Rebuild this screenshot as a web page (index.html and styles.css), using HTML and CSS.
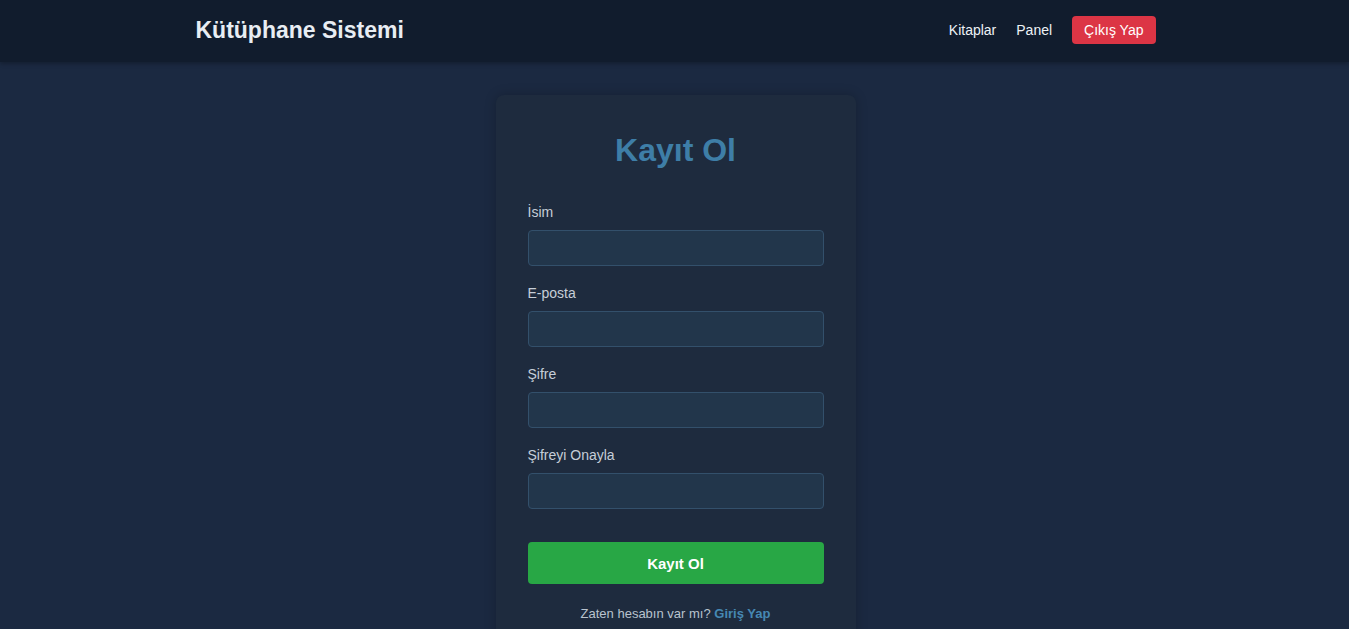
FILE: index.html
```html
<!DOCTYPE html>
<html lang="tr">
<head>
<meta charset="utf-8">
<title>Kayıt Ol - Kütüphane Sistemi</title>
<link rel="stylesheet" href="styles.css">
</head>
<body>
<header class="navbar">
  <div class="nav-inner">
    <a class="brand" href="#">Kütüphane Sistemi</a>
    <nav class="nav-links">
      <a href="#" class="nav-link">Kitaplar</a>
      <a href="#" class="nav-link">Panel</a>
      <a href="#" class="btn-logout">Çıkış Yap</a>
    </nav>
  </div>
</header>
<main class="main">
  <div class="card">
    <h2 class="card-title">Kayıt Ol</h2>
    <form class="form">
      <div class="form-group">
        <label class="label">İsim</label>
        <input class="input" type="text">
      </div>
      <div class="form-group">
        <label class="label">E-posta</label>
        <input class="input" type="email">
      </div>
      <div class="form-group">
        <label class="label">Şifre</label>
        <input class="input" type="password">
      </div>
      <div class="form-group">
        <label class="label">Şifreyi Onayla</label>
        <input class="input" type="password">
      </div>
      <button type="button" class="btn-submit">Kayıt Ol</button>
    </form>
    <p class="footer-text">Zaten hesabın var mı? <a href="#" class="footer-link">Giriş Yap</a></p>
  </div>
</main>
</body>
</html>
```

FILE: styles.css
```css
* { box-sizing: border-box; }
html, body {
  margin: 0;
  padding: 0;
}
body {
  background: #1b2941;
  font-family: "Liberation Sans", Arial, sans-serif;
  color: #c9d1db;
  min-height: 100vh;
}
a { text-decoration: none; }

.navbar {
  background: #111c2d;
  height: 62px;
  padding-left: 2px;
  padding-bottom: 2px;
  box-shadow: 0 2px 4px rgba(0,0,0,0.25);
}
.nav-inner {
  width: 960px;
  margin: 0 auto;
  height: 100%;
  display: flex;
  align-items: center;
  justify-content: space-between;
}
.brand {
  font-size: 23px;
  font-weight: bold;
  color: #e8edf3;
}
.nav-links {
  display: flex;
  align-items: center;
  gap: 20px;
}
.nav-link {
  font-size: 14px;
  color: #eef2f6;
}
.btn-logout {
  font-size: 14px;
  color: #ffffff;
  background: #dc3545;
  border-radius: 4px;
  padding: 6px 12px;
  line-height: 16px;
}

.main {
  display: flex;
  justify-content: center;
  padding-top: 33px;
  padding-left: 2px;
}
.card {
  width: 360px;
  background: #1e2b3e;
  border-radius: 8px;
  padding: 32px 32px 24px;
  box-shadow: 0 0 12px rgba(0,0,0,0.22);
}
.card-title {
  margin: 0 0 31px;
  text-align: center;
  font-size: 32px;
  line-height: 46px;
  font-weight: bold;
  color: #3e7ea7;
}
.form {
  display: flex;
  flex-direction: column;
}
.form-group {
  display: flex;
  flex-direction: column;
  margin-bottom: 19px;
}
.label {
  font-size: 14px;
  line-height: 16px;
  margin-bottom: 10px;
  color: #c6ced8;
}
.input {
  height: 36px;
  background: #22364b;
  border: 1px solid #33506b;
  border-radius: 4px;
  color: #e8edf3;
  padding: 0 10px;
  font-family: inherit;
  font-size: 14px;
}
.btn-submit {
  margin-top: 14px;
  height: 42px;
  border: none;
  border-radius: 4px;
  background: #28a745;
  color: #ffffff;
  font-family: inherit;
  font-size: 15px;
  font-weight: bold;
  cursor: pointer;
}
.footer-text {
  margin: 22px 0 0;
  text-align: center;
  font-size: 13px;
  line-height: 15px;
  color: #b9c3ce;
}
.footer-link {
  font-weight: bold;
  color: #4688b3;
}
```
